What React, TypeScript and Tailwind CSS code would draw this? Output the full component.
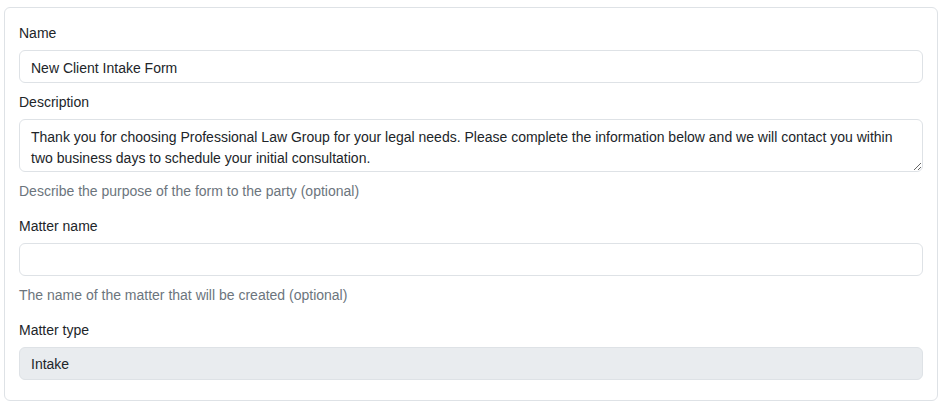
const inputBase =
  'block w-full rounded-[6px] border border-[#dee2e6] px-[11px] text-[14px] leading-[21px] text-[#212529] outline-none'

function Label({ children }: { children: React.ReactNode }) {
  return <label className="mb-[6px] block pt-[1px] text-[14px] leading-[21px] text-[#212529]">{children}</label>
}

function Help({ children }: { children: React.ReactNode }) {
  return <div className="mt-[9px] text-[14px] leading-[21px] text-[#6c757d]">{children}</div>
}

export default function App() {
  return (
    <div className="min-h-[408px] bg-white pt-[7px] pl-[4px] font-['Liberation_Sans',sans-serif]">
      <div className="w-[934px] rounded-[6px] border border-[#dee2e6] px-[14px] pt-[14px] pb-[20px]">
        <div className="mb-[8px]">
          <Label>Name</Label>
          <input className={`${inputBase} h-[33px] pt-[2px]`} defaultValue="New Client Intake Form" />
        </div>

        <div className="mb-[13px]">
          <Label>Description</Label>
          <textarea
            className={`${inputBase} h-[53px] pt-[7px] pb-[3px]`}
            defaultValue="Thank you for choosing Professional Law Group for your legal needs. Please complete the information below and we will contact you within two business days to schedule your initial consultation."
          />
          <Help>Describe the purpose of the form to the party (optional)</Help>
        </div>

        <div className="mb-[13px]">
          <Label>Matter name</Label>
          <input className={`${inputBase} h-[33px]`} defaultValue="" />
          <Help>The name of the matter that will be created (optional)</Help>
        </div>

        <div>
          <Label>Matter type</Label>
          <div className="flex h-[33px] items-center rounded-[6px] border border-[#dee2e6] bg-[#e9ecef] px-[11px] pt-[2px] text-[14px] leading-[21px] text-[#212529]">
            Intake
          </div>
        </div>
      </div>
    </div>
  )
}
